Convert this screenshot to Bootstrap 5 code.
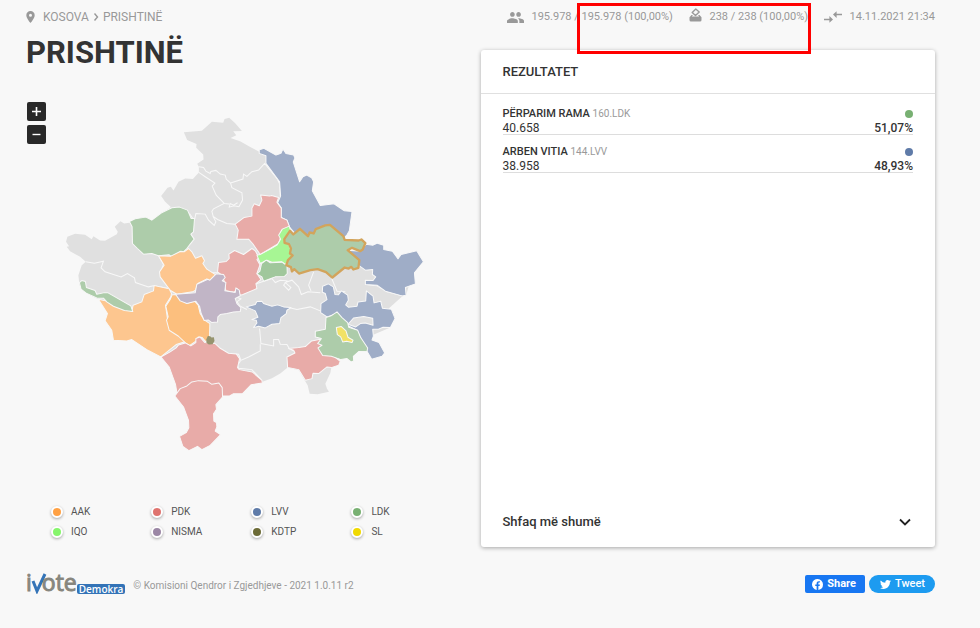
<!DOCTYPE html>
<html lang="sq">
<head>
<meta charset="utf-8">
<meta name="viewport" content="width=device-width, initial-scale=1">
<title>Prishtinë – Rezultatet</title>
<link href="https://cdn.jsdelivr.net/npm/bootstrap@5.3.0/dist/css/bootstrap.min.css" rel="stylesheet">
<style>
body{background:#f8f8f8;color:#333;font-family:Roboto,"Liberation Sans",sans-serif;font-size:12px;line-height:16px}
.page{padding:0 45px 0 26px}
.topbar{height:34px;color:#999;font-size:12px}
.topbar a{color:#999;text-decoration:none}
.topbar svg{fill:#999;flex:none}
.stats{font-size:11px;white-space:nowrap;padding-left:26px}
.highlight{position:absolute;left:96px;top:3px;width:234px;height:51px;border:3px solid #f00;z-index:5;pointer-events:none}
.place{font-size:31px;line-height:38px;font-weight:700;color:#333}
.map-box{margin-top:30px}
.zoomer{position:absolute;left:1px;top:0}
.zoomer button{width:19px;height:19px;background:#292929;color:#fff;border:0;border-radius:2px;padding:0;display:flex;align-items:center;justify-content:center}
.map-box .area{stroke:#f8f8f8;stroke-width:3;stroke-linejoin:round}
.legend-grid{padding:5px 29px 5px 25px;font-size:10px;line-height:20px;color:#555}
.legend-grid li{width:25%}
.legend-dot{width:12px;height:12px;border:2px solid #fff;border-radius:50%;box-shadow:0 1px 3px #0005;margin-right:8px;background:currentColor}
.c-aak{color:#ffa144}.c-pdk{color:#df746f}.c-lvv{color:#5f7ba8}.c-ldk{color:#78b072}
.c-iqo{color:#86f56c}.c-nisma{color:#9b87a5}.c-kdtp{color:#6c6b37}.c-sl{color:#f0d900}
.results{margin-top:16px;background:#fff;border-radius:3px;box-shadow:0 1px 4px #0005}
.results h2{font-size:13px;line-height:20px;font-weight:500;margin:0;padding:12px 22px 11px;border-bottom:1px solid #e0e0e0}
.candidates{padding:13px 22px 0}
.candidates li{border-bottom:1px solid #ddd;margin-bottom:10px;line-height:14px}
.candidates li>div{height:14px}
.candidates .name{font-size:11px;font-weight:500}
.candidates small{font-size:10px;font-weight:400;color:#999}
.party-dot{width:8px;height:8px;border-radius:50%;background:currentColor}
.candidates li{height:28px;box-sizing:content-box;height:27px}
.pct{font-weight:500}
.more{padding:15px 22px;font-size:13px;line-height:20px;font-weight:500;background:none;border:0;color:#333}
.footer{padding-top:24px;color:#999;font-size:10px}
.brand{font-family:"Open Sans","Noto Sans",sans-serif;font-size:23px;line-height:23px;font-weight:400;color:#87867e;text-decoration:none;-webkit-text-stroke:1px #87867e}
.brand svg{margin:0 -5px 0 -1px}
.brand .tag{font-size:10px;line-height:10px;background:#3373b7;color:#fff;border-radius:2px;padding:0 2px;-webkit-text-stroke:0;font-weight:600}
.share{height:18px;border:0;color:#fff;font-size:11px;font-weight:700;padding:0 9px 0 7px;border-radius:2px;background:#1877f2}
.share.tweet{background:#1d9bf0;border-radius:9px;padding:0 10px 0 11px;font-weight:500}
</style>
<script src="https://cdn.jsdelivr.net/npm/bootstrap@5.3.0/dist/js/bootstrap.bundle.min.js"></script>
</head>
<body>
<div class="page container-fluid">
  <header class="row g-0 topbar align-items-center">
    <nav class="col-6 d-flex align-items-center" aria-label="Vendndodhja">
      <svg class="me-2" width="9" height="12" viewBox="0 0 14 20"><path d="M7 0a7 7 0 0 0-7 7c0 5.2 7 13 7 13s7-7.800 7-13a7 7 0 0 0-7-7zm0 9.500a2.500 2.500 0 1 1 0-5 2.500 2.500 0 0 1 0 5z"/></svg>
      <a href="#">KOSOVA</a>
      <svg class="mx-1" width="6" height="8" viewBox="0 0 6 8"><path d="M1.500 .500l3 3.500-3 3.500" fill="none" stroke="#999" stroke-width="1.400"/></svg>
      <a href="#">PRISHTINË</a>
    </nav>
    <div class="col-6 position-relative align-self-stretch">
      <div class="stats d-flex align-items-center justify-content-between h-100">
        <span class="d-flex align-items-center gap-2"><svg width="17" height="11" viewBox="1 5 22 14"><path d="M16 11c1.660 0 2.990-1.340 2.990-3S17.660 5 16 5s-3 1.340-3 3 1.340 3 3 3zm-8 0c1.660 0 2.990-1.340 2.990-3S9.660 5 8 5 5 6.340 5 8s1.340 3 3 3zm0 2c-2.330 0-7 1.170-7 3.500V19h14v-2.500C15 14.170 10.330 13 8 13zm8 0c-.29 0-.62.02-.97.05 1.160.84 1.970 1.970 1.970 3.450V19h6v-2.500c0-2.330-4.670-3.500-7-3.500z"/></svg>195.978 / 195.978 (100,00%)</span>
        <span class="d-flex align-items-center gap-2"><svg class="mb-1" width="13" height="14" viewBox="0 0 13 14"><path d="M2.500 7L.500 9.300V12A1.500 1.500 0 0 0 2 13.500h9a1.500 1.500 0 0 0 1.500-1.500V9.300L10.500 7H9l1.200 1.600H2.800L4 7z"/><path d="M3.200 4.400L6.800 1l3.400 3-3.700 3.500z" fill="none" stroke="#999" stroke-width="1.400" stroke-linejoin="round"/></svg>238 / 238 (100,00%)</span>
        <span class="d-flex align-items-center gap-2"><svg width="18" height="14" viewBox="0 0 20 14"><path d="M0 9h6V6l4 3.800-4 3.700v-3H0zM20 3.500h-6V.500L10 4.300 14 8V5h6z"/></svg>14.11.2021 21:34</span>
      </div>
      <div class="highlight"></div>
    </div>
  </header>
  <main class="row g-0">
    <section class="col-6">
      <h1 class="place m-0">PRISHTINË</h1>
      <div class="map-box position-relative">
        <svg class="d-block w-100" viewBox="-72 -24 1362 1185" role="img" aria-label="Harta e komunave">
          <path fill="#e0e0e0" d="M401 67L455 62 485 35 519 38 523 27 537 23 555 40 575 63 549 64 558 76 541 84 571 94 600 111 646 135 760 380 1000 470 1080 510 1067 555 1055 559 1015 595 1025 600 1034 625 1020 652 930 690 850 748 850 760 843 772 840 788 825 820 830 835 836 844 802 852 778 850 772 825 762 808 745 780 712 772 690 790 665 804 635 815 500 800 332 740 280 640 145 567 120 555 88 525 85 495 95 465 107 455 90 440 60 423 50 410 57 408 48 395 52 380 75 371 105 374 125 387 130 378 150 391 165 392 200 372 203 365 194 350 211 333 222 340 238 338 300 340 362 291 345 275 333 258 352 233 362 230 370 241 385 215 405 205 428 207 446 187 446 170 441 161 460 148 459 133 438 113 439 102 411 90Z"/>
          <g fill="none" stroke="#f8f8f8" stroke-width="3">
            <path d="M446 187L465 200 494 219 486 228 498 255 522 280 490 296 485 304 489 319 502 328 530 340 555 342M446 170L460 172 467 183 480 190 482 184 497 181 510 192 525 195 528 207 541 219 545 233 575 248 577 270 566 290 551 287 537 291 540 280 550 285 562 278M522 280L537 282M541 219L578 207 580 192 590 199 605 185 625 180 643 160 688 215 690 258M418 310L428 325 434 325 437 310 465 312 475 330 492 346 497 335 488 318M560 387H600L626 423M107 455L133 459 160 453 153 473 165 485 213 500 232 490 253 503 256 517 295 530 310 527 357 535M325 437L340 462 330 490M465 473L478 487 503 488"/>
            <g transform="translate(540 420)"><path d="M80 100L60 115 22 130 18 140 32 146 20 155 30 168 50 178M80 100L125 85 135 97 150 90 170 92 160 105 175 120 182 112 165 97 185 90 205 110 213 133 233 125 270 128M250 65L235 105 242 122M136 170L175 172 200 178 240 170 270 182M88 235L92 280 130 287 130 268 145 268 150 282 170 283 177 295 190 302M90 282L90 302 55 320 32 330 22 345 25 354 65 358 95 390M32 330L25 312 0 310M172 352V320M303 82L320 123 345 125M408 103L440 107 470 124 515 137M353 225L375 220 400 225 427 225"/></g>
          </g>
          <g class="area" fill="#9fadc7">
            <path d="M627 119L641 115 677 135 692 130 698 117 707 130 730 135 734 144 729 156 748 215 758 200 769 195 784 203 790 215 786 242 810 286 851 281 882 302 905 304 897 362 890 374 880 385 760 400 717 350 710 330 692 322 693 294 682 278 691 258 688 215 647 160V137L627 130Z"/>
            <path d="M892 420L930 423 947 402 968 405 981 399 1000 405V418L1026 423 1043 446 1052 433 1099 422 1119 455 1092 488 1095 521 1065 532 1067 555 1055 557 1005 543 980 525 945 523V510L968 511 976 500 966 493 967 478 945 480 924 465Z"/>
          </g>
          <g class="area" transform="translate(540 420)">
            <path fill="#9fadc7" d="M277 108L294 101 309 110 314 133 324 134 333 122 352 135 354 150 346 164 354 171 380 168 383 155 406 152 408 122 428 138 431 158 451 153 456 174 483 177 494 205 480 232 458 231 444 237 427 237 429 258 425 269 446 277 463 308 455 318 424 327 408 300 390 260 380 240 350 225 320 190 290 200 271 187 272 160 290 148 285 130 276 126Z"/>
            <path fill="#e0e0e0" d="M353 222L370 203 400 199 427 204 428 225 405 218 390 220 376 230Z"/>
            <path fill="#9fadc7" d="M48 170L75 163 80 154 95 153 100 160 125 168 142 164 160 170 182 172 170 180 168 190 152 202 148 220 125 222 105 233 85 228 70 232 80 218 78 210 65 208 83 201 75 182Z"/>
            <path fill="#e8aba8" d="M170 320L194 308 190 300 175 295 205 292 225 289 244 272 270 267 300 310 330 333 325 345 303 352 290 350 265 370 248 369 245 385 225 390 205 358 172 352Z"/>
            <path fill="#adccaa" d="M287 202L302 197 320 185 335 202 352 217 355 231 382 240 390 260 412 293 410 303 385 304 369 318 370 332 362 335 350 325 332 328 303 318 277 316 263 293 275 285 262 280 273 265 255 260 255 243 285 237Z"/>
            <path fill="#f2e267" d="M318 232L333 229 347 242 353 261 368 270 365 277 349 273 337 275 331 260 321 253Z"/>
          </g>
          <g class="area">
            <path fill="#adccaa" d="M238 334L255 326 287 321 305 330 333 309 365 293 388 291 412 300 423 325 433 325 430 365 422 372 432 387 420 402 410 415 400 425 392 423 378 435 362 438 357 434 325 437 305 430 280 432 262 415 247 400 246 350Z"/>
            <path fill="#e8aba8" d="M555 342L582 322 605 318 605 294 612 281 627 287 635 270 631 255 658 258 664 256 685 262 680 276 693 294V322L710 330 717 348 695 370 685 400 630 433 607 400 595 387 560 387 564 360Z"/>
            <path fill="#e8aba8" d="M505 457L528 454 537 445 536 432 553 421 580 433 605 415 615 422 626 442 620 448 629 464 620 490 632 508 617 520 620 535 578 553 570 555 560 535 552 546 527 542 522 513 515 495 502 485Z"/>
            <path fill="#a7f694" d="M620 435L632 432 660 417 680 405 691 387 685 375 696 357 717 348 721 362 702 387 715 403 728 435 712 453 705 463 695 455 665 456 650 450 630 460Z"/>
            <path fill="#a0c79c" d="M634 460L648 450 660 458 695 456 710 466 711 490 702 499 675 500 662 505 640 513 635 500 620 491 629 483Z"/>
            <path fill="#fdc68f" d="M325 437L362 438 390 424 402 425 415 415 425 425 436 444 455 437 463 452 458 460 470 477 498 495 478 512 470 506 443 520 436 540 427 545 380 552 360 540 330 500 328 485 342 465Z"/>
          </g>
          <path fill="#adccaa" stroke="#d2a45c" stroke-width="7" stroke-linejoin="round" d="M719 362L729 373 749 356 773 378 778 367 790 370 796 357 825 346 839 344 879 378 883 389 925 391 933 388 945 399 937 418 929 423 905 413 892 420 927 450 924 473 909 478 903 470 895 475 883 472 846 502 827 486 802 477 780 480 746 490 732 477 725 484 722 471 708 465 713 450 727 436 719 430 722 415 716 402 703 398 702 387Z"/>
          <g class="area" transform="translate(0 420)">
            <path fill="#fdc68f" d="M145 147L180 155 245 184 249 165 275 155 282 133 310 122 312 106 357 116 364 130 362 140 346 165 352 205 405 267 402 275 378 283 332 320 290 298 245 268 230 272 190 270 185 240 165 212 172 190Z"/>
            <path fill="#fcbf7e" d="M366 134L382 133 410 160 433 152 444 165 450 190 462 209 479 220 478 260 467 275 456 262 444 260 438 272 418 286 405 277 385 258 357 240 349 210 354 200 347 168 360 148Z"/>
            <path fill="#c1b5c6" d="M376 132L435 128 440 102 473 87 479 90 498 71 520 73 525 82 516 92 527 97 524 122 555 127 557 113 567 120 570 137 555 145 560 160 572 172 570 184 550 185 530 190 510 193 503 200 502 215 485 217 474 209 462 211 453 190 448 168 437 153 410 160 390 152Z"/>
            <path fill="#adccaa" d="M88 97L95 91 106 94 109 112 135 121 140 132 160 128 174 128 242 167 248 184 223 181 190 168 170 155 160 144 140 143 110 130 93 117Z"/>
            <path fill="#e8aba8" d="M332 320L360 305 378 293 385 284 405 278 422 287 437 277 437 265 449 260 464 277 495 280 510 294 535 309 558 311 568 325 562 352 567 358 606 365 635 390 636 398 603 403 577 430 550 430 538 437 517 437 380 426 376 402 357 350Z"/>
            <path fill="#e8aba8" d="M374 437L390 415 410 407 425 395 445 391 472 393 485 402 506 398 516 412 517 440 497 463 499 477 490 490 491 512 499 517 500 530 495 542 511 553 480 585 455 598 442 588 416 601 398 588 388 558 408 547 416 532 415 510 400 470Z"/>
            <path fill="#96946f" stroke="none" d="M468 268L473 257 480 258 484 262 491 261 493 272 487 282 476 283 469 278Z"/>
          </g>
        </svg>
        <div class="zoomer d-flex flex-column gap-1">
          <button type="button" aria-label="Zmadho"><svg width="11" height="11" viewBox="0 0 11 11"><path d="M5.500 1v9M1 5.500h9" stroke="#fff" stroke-width="1.600"/></svg></button>
          <button type="button" aria-label="Zvogëlo"><svg width="11" height="11" viewBox="0 0 11 11"><path d="M1.500 5.500h8" stroke="#fff" stroke-width="1.400"/></svg></button>
        </div>
      </div>
      <ul class="legend-grid list-unstyled d-flex flex-wrap m-0">
        <li class="d-flex align-items-center"><i class="legend-dot c-aak"></i>AAK</li>
        <li class="d-flex align-items-center"><i class="legend-dot c-pdk"></i>PDK</li>
        <li class="d-flex align-items-center"><i class="legend-dot c-lvv"></i>LVV</li>
        <li class="d-flex align-items-center"><i class="legend-dot c-ldk"></i>LDK</li>
        <li class="d-flex align-items-center"><i class="legend-dot c-iqo"></i>IQO</li>
        <li class="d-flex align-items-center"><i class="legend-dot c-nisma"></i>NISMA</li>
        <li class="d-flex align-items-center"><i class="legend-dot c-kdtp"></i>KDTP</li>
        <li class="d-flex align-items-center"><i class="legend-dot c-sl"></i>SL</li>
      </ul>
    </section>
    <section class="col-6 d-flex">
      <div class="results d-flex flex-column flex-grow-1">
        <h2>REZULTATET</h2>
        <ul class="candidates list-unstyled m-0 flex-grow-1">
          <li>
            <div class="d-flex justify-content-between align-items-center"><span class="name">PËRPARIM RAMA <small>160.LDK</small></span><i class="party-dot c-ldk"></i></div>
            <div class="d-flex justify-content-between"><span>40.658</span><span class="pct">51,07%</span></div>
          </li>
          <li>
            <div class="d-flex justify-content-between align-items-center"><span class="name">ARBEN VITIA <small>144.LVV</small></span><i class="party-dot c-lvv"></i></div>
            <div class="d-flex justify-content-between"><span>38.958</span><span class="pct">48,93%</span></div>
          </li>
        </ul>
        <button type="button" class="more d-flex justify-content-between align-items-center w-100">Shfaq më shumë
          <svg width="16" height="12" viewBox="0 0 16 12"><path d="M3 3.500l5 5 5-5" fill="none" stroke="#222" stroke-width="1.800"/></svg></button>
      </div>
    </section>
  </main>
  <footer class="footer d-flex justify-content-between align-items-start">
    <div class="d-flex align-items-end gap-2">
      <a class="brand d-flex align-items-end" href="#">i<svg width="16" height="21" viewBox="0 0 16 21"><path d="M2 8l4 10L14 1" fill="none" stroke="#3373b7" stroke-width="3"/></svg>ote<span class="tag">Demokra</span></a>
      <span>© Komisioni Qendror i Zgjedhjeve - 2021 1.0.11 r2</span>
    </div>
    <div class="d-flex gap-1 pt-1">
      <button type="button" class="share d-flex align-items-center gap-1"><svg width="11" height="11" viewBox="0 0 24 24"><path fill="#fff" d="M24 12a12 12 0 1 0-13.900 11.900v-8.400H7.100V12h3V9.400c0-3 1.800-4.700 4.600-4.700 1.300 0 2.600.2 2.600.2v3h-1.500c-1.500 0-1.900.9-1.900 1.900V12h3.300l-.5 3.500h-2.800v8.400A12 12 0 0 0 24 12z"/></svg>Share</button>
      <button type="button" class="share tweet d-flex align-items-center gap-1"><svg width="11" height="11" viewBox="0 2 24 20"><path fill="#fff" d="M23.950 4.570a10 10 0 0 1-2.820.77 4.960 4.960 0 0 0 2.160-2.720 9.900 9.900 0 0 1-3.120 1.190 4.920 4.920 0 0 0-8.390 4.480A13.900 13.900 0 0 1 1.640 3.160a4.920 4.920 0 0 0 1.520 6.570 4.900 4.900 0 0 1-2.230-.61v.06a4.920 4.920 0 0 0 3.950 4.830 5 5 0 0 1-2.210.08 4.940 4.940 0 0 0 4.600 3.420A9.870 9.870 0 0 1 0 19.540a14 14 0 0 0 7.550 2.210c9.050 0 14-7.500 14-13.980 0-.21 0-.42-.02-.63a9.900 9.900 0 0 0 2.420-2.570z"/></svg>Tweet</button>
    </div>
  </footer>
</div>
</body>
</html>
